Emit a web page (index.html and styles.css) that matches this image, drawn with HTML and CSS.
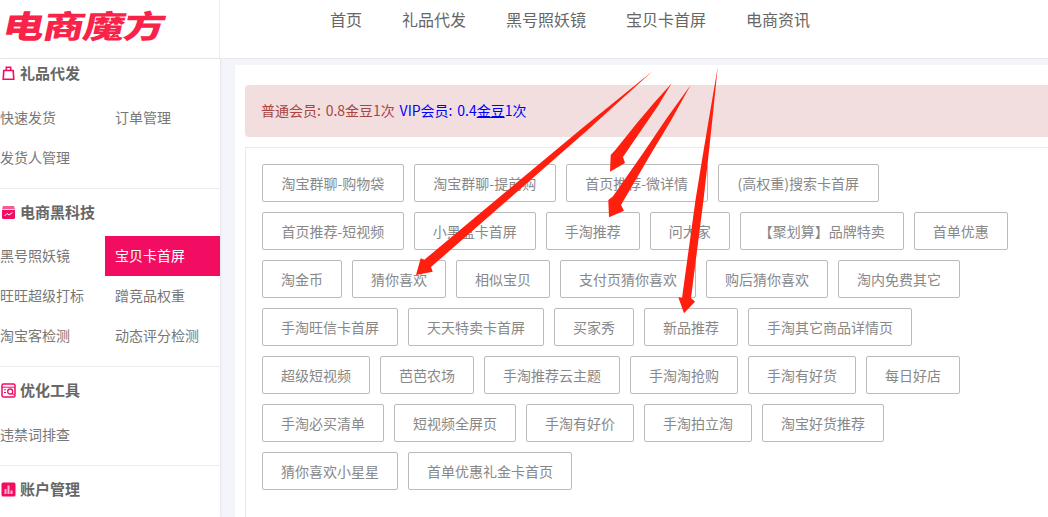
FILE: index.html
```html
<!DOCTYPE html>
<html lang="zh">
<head>
<meta charset="utf-8">
<title>电商魔方</title>
<link rel="stylesheet" href="styles.css">
</head>
<body>
<div class="page">
  <header class="topbar">
    <div class="logo-cell"><span class="logo">电商魔方</span></div>
    <nav class="nav">
      <a>首页</a><a>礼品代发</a><a>黑号照妖镜</a><a>宝贝卡首屏</a><a>电商资讯</a>
    </nav>
  </header>
  <div class="body-row">
    <aside class="sidebar">
      <section class="group first roomy">
        <h3 class="head">
          <svg class="ico" viewBox="0 0 15 15"><path d="M2.800 4.500h9.400l.6 8.700H2.200zM5.300 4.500V1.300h4.400v3.200" fill="none" stroke="#f20d63" stroke-width="1.600"/></svg>
          礼品代发
        </h3>
        <div class="items"><a>快速发货</a><a>订单管理</a><a>发货人管理</a></div>
      </section>
      <section class="group">
        <h3 class="head">
          <svg class="ico" viewBox="0 0 15 15"><path d="M2 1h11l1 3.200H1z" fill="#f85b92"/><path d="M1 5h13v7.500q0 1.500-1.500 1.500h-10Q1 14 1 12.500z" fill="#f20d63"/><path d="M3.500 11l2.500-2.500 2 1.500 3.500-2.500" fill="none" stroke="#fff" stroke-width="1"/></svg>
          电商黑科技
        </h3>
        <div class="items"><a>黑号照妖镜</a><a class="active">宝贝卡首屏</a><a>旺旺超级打标</a><a>蹭竞品权重</a><a>淘宝客检测</a><a>动态评分检测</a></div>
      </section>
      <section class="group roomy">
        <h3 class="head">
          <svg class="ico" viewBox="0 0 15 15"><rect x="1" y="1" width="13" height="13" rx="1.500" fill="none" stroke="#f20d63" stroke-width="1.500"/><path d="M1 4.200h13M3 6.800h2M3 9.500h2" stroke="#f20d63" fill="none"/><circle cx="9.200" cy="8.500" r="2.500" fill="none" stroke="#f20d63" stroke-width="1.300"/><path d="M11 10.300l1.700 1.700" stroke="#f20d63" stroke-width="1.300"/></svg>
          优化工具
        </h3>
        <div class="items"><a>违禁词排查</a></div>
      </section>
      <section class="group">
        <h3 class="head">
          <svg class="ico" viewBox="0 0 15 15"><rect x="0.500" y="0.500" width="14" height="14" rx="1.500" fill="#f20d63"/><path d="M3.500 7h2v5h-2zM6.500 3.500h2V12h-2zM9.500 8.500h2V12h-2z" fill="#fbb6cf"/></svg>
          账户管理
        </h3>
      </section>
    </aside>
    <main class="main">
      <div class="card">
        <div class="alert">
          普通会员: 0.8金豆1次 <span class="vip">VIP会员: 0.4<u>金豆</u>1次</span>
        </div>
        <div class="panel">
          <div class="btns">
            <a class="btn dash">淘宝群聊-购物袋</a><a class="btn dash">淘宝群聊-提前购</a><a class="btn dash">首页推荐-微详情</a><a class="btn paren">(高权重)搜索卡首屏</a>
            <a class="btn dash">首页推荐-短视频</a><a class="btn">小黑盒卡首屏</a><a class="btn">手淘推荐</a><a class="btn">问大家</a><a class="btn">【聚划算】品牌特卖</a><a class="btn">首单优惠</a>
            <a class="btn">淘金币</a><a class="btn">猜你喜欢</a><a class="btn">相似宝贝</a><a class="btn">支付页猜你喜欢</a><a class="btn">购后猜你喜欢</a><a class="btn">淘内免费其它</a>
            <a class="btn">手淘旺信卡首屏</a><a class="btn">天天特卖卡首屏</a><a class="btn">买家秀</a><a class="btn">新品推荐</a><a class="btn">手淘其它商品详情页</a>
            <a class="btn">超级短视频</a><a class="btn">芭芭农场</a><a class="btn">手淘推荐云主题</a><a class="btn">手淘淘抢购</a><a class="btn">手淘有好货</a><a class="btn">每日好店</a>
            <a class="btn">手淘必买清单</a><a class="btn">短视频全屏页</a><a class="btn">手淘有好价</a><a class="btn">手淘拍立淘</a><a class="btn">淘宝好货推荐</a>
            <a class="btn">猜你喜欢小星星</a><a class="btn">首单优惠礼金卡首页</a>
          </div>
        </div>
      </div>
    </main>
  </div>
  <svg class="arrows" width="1048" height="517" viewBox="0 0 1048 517">
    <polygon points="652.700,71 586.800,130.700 520,189.200 431,267 432.700,271.700 416,275 420.700,258.300 424.300,259.800 515.400,183.800 583.600,126.900"/>
    <polygon points="671.700,83.300 657.900,105.900 643,127.700 623,157 625,163 610,171.700 610.700,155 615.300,150 637,123.100 653.900,102.900"/>
    <polygon points="690.700,85 670.700,121.100 649.500,156.300 621,205 624,210.700 609,217.300 608.300,200 612.800,196.500 643.500,152.500 666.500,118.400"/>
    <polygon points="717.700,67.300 712.300,120 708,160 703.500,200 691,298 695,301.700 684,313.300 678.300,297.300 682,298 695.500,200 702,160 708.700,120"/>
  </svg>
</div>
</body>
</html>
```
FILE: styles.css
```css
* { box-sizing: border-box; }
html, body { margin: 0; padding: 0; }
body {
  font-family: "Noto Sans CJK SC", "Liberation Sans", sans-serif;
  font-size: 14px;
  color: #666;
  background: #f4f5fa;
}
.page {
  position: relative;
  width: 1048px;
  height: 517px;
  overflow: hidden;
  display: flex;
  flex-direction: column;
}
.topbar {
  flex: none;
  height: 59px;
  display: flex;
  background: #fff;
  border-bottom: 1px solid #e8e9ed;
}
.logo-cell {
  width: 220px;
  border-right: 1px solid #eeeff2;
  padding-left: 4px;
}
.logo {
  display: inline-block;
  font-size: 36px;
  font-weight: 900;
  line-height: 48px;
  letter-spacing: -1px;
  color: #f9234a;
  transform: skewX(-12deg) scale(1.15, .88);
  transform-origin: left center;
}
.nav {
  display: flex;
  gap: 40px;
  padding-left: 110px;
  font-size: 16px;
  line-height: 38px;
  color: #666;
}
.body-row {
  flex: 1;
  display: flex;
  min-height: 0;
}
.sidebar {
  flex: none;
  width: 220px;
  background: #fff;
  box-shadow: 1px 0 2px rgba(0,0,0,.06);
}
.group {
  padding: 12px 0 10px;
  border-bottom: 1px solid #ececef;
}
.group.first { padding-top: 3px; }
.group:last-child { border-bottom: 0; }
.head {
  margin: 0 0 11px;
  height: 24px;
  display: flex;
  align-items: center;
  gap: 4px;
  padding: 0 0 2px 1px;
  font-size: 15px;
  font-weight: 700;
  line-height: 22px;
  color: #666;
}
.roomy .head { margin-bottom: 12px; }
.ico { width: 15px; height: 15px; flex: none; }
.items {
  display: grid;
  grid-template-columns: 115px 115px;
  margin-left: -10px;
}
.items a {
  height: 40px;
  line-height: 38px;
  padding-left: 10px;
  white-space: nowrap;
  color: #777;
}
.items a.active {
  background: #f20d63;
  color: #fff;
}
.main {
  flex: 1;
  min-width: 0;
  padding: 6px 0 0 15px;
}
.card {
  width: 900px;
  height: 600px;
  background: #fff;
  padding: 20px 0 0 10px;
}
.alert {
  height: 52px;
  line-height: 50px;
  padding-left: 16px;
  background: #f2dede;
  border-radius: 4px;
  color: #a94442;
  word-spacing: 1.6px;
}
.vip { color: #00f; }
.panel {
  margin-top: 10px;
  border: 1px solid #e9e9ec;
  padding: 16px 0 0 16px;
  height: 400px;
}
.btns {
  width: 760px;
  display: flex;
  flex-wrap: wrap;
  gap: 10px;
}
.btn {
  height: 38px;
  line-height: 36px;
  padding: 0 18px;
  border: 1px solid #bbb;
  border-radius: 2px;
  color: #888;
  white-space: nowrap;
}
.btn.dash { padding: 0 18.5px; }
.btn.paren { padding: 0 19px; }
.arrows {
  position: absolute;
  left: 0;
  top: 0;
  pointer-events: none;
}
.arrows polygon { fill: #ff1f0f; }
```
